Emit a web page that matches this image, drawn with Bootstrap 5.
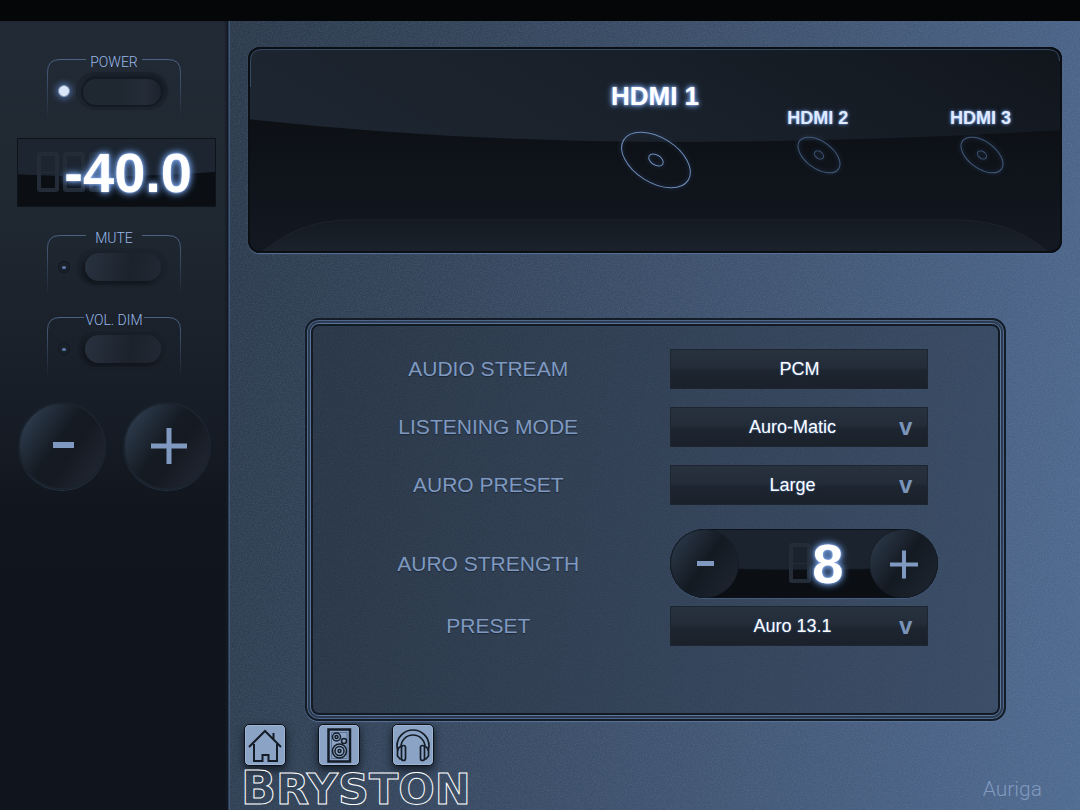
<!DOCTYPE html>
<html lang="en">
<head>
<meta charset="utf-8">
<meta name="viewport" content="width=device-width, initial-scale=1">
<title>Bryston Auriga</title>
<link href="https://cdn.jsdelivr.net/npm/bootstrap@5.3.0/dist/css/bootstrap.min.css" rel="stylesheet">
<style>
:root{--steel:#7f99c0;--glow:#6f9be0;--ink:#10151c}
body{background:#050608;font-family:"Liberation Sans",Arial,sans-serif;color:#fff}
.topbar{height:21px;background:#050608}
button,select{font-family:inherit}

/* left rail */
.rail{width:230px;padding-top:33px;background:linear-gradient(#222a35 0,#1f2731 25%,#171d26 50%,#11161e 62%,#10151d 100%);box-shadow:inset -1px 0 #40587a,inset -2px 0 #2a3a50,inset -4px 0 2px #141a22}
.ctl{width:134px;height:64px;margin-left:47px}
.ctl+.ctl{margin-top:18px}
.ctl .bracket{left:0;top:5px}
.ctl-name{font-family:Roboto,"Liberation Sans",sans-serif;font-weight:300;font-size:14px;line-height:16px;height:18px;color:#9ab8e8}
.ctl-row{padding-left:11px;gap:6px;height:38px}
.led{width:12px;height:12px;border-radius:50%;background:#1a212b;box-shadow:inset 0 0 0 1px #141a22}
.led::after{content:"";display:block;width:4px;height:3px;border-radius:50%;background:#5c7dae;margin:5px 4px}
.led.on{background:#dbe6f8;border:1px solid #7d93b4;box-shadow:0 0 6px 2px #4a6694}
.led.on::after{display:none}
.switch{width:92px;height:38px;border-radius:19px;border:1px solid #1c232d;background:rgba(16,21,28,.18);padding:4px 4px 4px 8px}
.switch i{display:block;width:76px;height:28px;border-radius:14px;background:linear-gradient(100deg,#28323f,#1c222c 60%,#222934);box-shadow:-3px 3px 4px #11161d}
.switch.on i{width:82px;height:30px;margin-left:-4px;border:2px solid #141a23;border-radius:15px;background:linear-gradient(90deg,#1f2731 45%,#242c38 80%,#1c232d);box-shadow:2px -2px 4px #141a22}
.readout{height:69px;margin:20px 14px 23px 17px;padding-right:23px;background:radial-gradient(ellipse 130% 56% at 40% 0,#1c2530 98%,#0b0f14 100%);border:1px solid #0f141b}
.digits{font-size:56px;line-height:67px;font-weight:700;text-shadow:0 0 2px #a9c6ff,0 0 6px var(--glow),0 0 8px var(--glow)}
/* unlit display cells */
.unlit{left:19px;top:13px;gap:4px}
.unlit i{width:22px;height:40px;border:4px solid #232c37;border-radius:3px;background:linear-gradient(#232c37,#232c37) center/100% 1px no-repeat}
.round{width:88px;height:88px;border-radius:50%;border:2px solid #1b232e;padding:0;background:linear-gradient(125deg,#2f3e50 8%,#151b23 45%,#151a22 60%,#222834 95%);box-shadow:0 1px 0 #253140}
.dials{gap:17px;margin:26px 2px 0 0}
.round svg,.knob svg{display:block;margin:auto;fill:none;stroke:var(--steel)}

/* brushed plate */
.plate{padding:26px 18px 0;background:
 url("data:image/svg+xml,%3Csvg xmlns='http://www.w3.org/2000/svg' width='200' height='200'%3E%3Cfilter id='n'%3E%3CfeTurbulence type='fractalNoise' baseFrequency='.85' numOctaves='3' stitchTiles='stitch'/%3E%3CfeColorMatrix values='0 0 0 0 .6 0 0 0 0 .7 0 0 0 0 .85 .5 0 0 0 -.17'/%3E%3C/filter%3E%3Crect width='200' height='200' filter='url(%23n)' opacity='.4'/%3E%3C/svg%3E"),
 linear-gradient(100deg,#2b394b 0,#314257 22%,#3c4f6a 50%,#486083 82%,#4f6a90 100%)}
.screen{height:206px;border-radius:12px;background:#11161d;box-shadow:0 1px 1px #58739a;overflow:hidden}
.screen>svg{inset:0}
.slot{width:20%;color:#fff;text-decoration:none}
.slot-name{font-weight:700;font-size:18px;line-height:24px;margin-top:59px;color:#dfeaff;text-shadow:0 0 2px #7fa5e8,0 0 4px #5679b5}
.slot svg{display:block;fill:none;stroke:#42597b;margin:3px auto 0;overflow:visible;filter:drop-shadow(0 0 2px #2f4668)}
.slot.current .slot-name{font-size:26px;line-height:32px;margin-top:33px;color:#fff;text-shadow:0 0 2px #a9c6ff,0 0 5px var(--glow),0 0 7px var(--glow)}
.slot.current svg{stroke:#6d8cba;margin-top:16px}

.panel{margin:65px 56px 0 57px;height:403px;border-radius:14px;padding:29px 0 0;border:2px solid #141c27;background:rgba(34,42,55,.42);box-shadow:inset 0 0 0 1px #4d6689,inset 0 0 0 3px #2c3b50,inset 0 0 0 4px #5a759c,inset 0 0 0 6px #131a24,0 1px 1px #58739a}
.field{min-height:40px;margin-bottom:18px}
.field.tall{margin:24px 0 8px}
.field-name{width:52%;font-size:21px;line-height:24px;color:var(--steel);text-shadow:0 1px 1px #1c2736}
.box{width:258px;height:40px;font-size:18px;line-height:38px;color:#fff;text-align:center;border:1px solid #1d2530;border-radius:0;background:linear-gradient(#28323f,#232c38 45%,#1d2530 55%,#1b212b);text-shadow:0 0 2px #4a74b5}
.field-name+*{margin-left:1px}
select.box{appearance:none;text-align-last:center;padding:0 14px 0 0}
.caret{right:16px;top:0;font-size:24px;line-height:40px;font-weight:700;color:#7a94ba;pointer-events:none}
.stepper{width:268px;height:69px;border-radius:35px;background:radial-gradient(ellipse 130% 60% at 50% 0,#1b232e 96%,#0b0f14 100%);box-shadow:inset 0 0 0 1px #0c1118,0 1px 1px #465d7d}
.knob{width:69px;height:69px;border-radius:50%;border:1px solid #161e28;padding:0;background:linear-gradient(125deg,#2a3747 10%,#141a22 50%,#1f2530 95%)}
.count{width:54px;margin-right:26px}
.count .digits{line-height:69px}
.count .unlit{left:0;top:14px}

.tiles{gap:32px;margin-left:-4px;padding-top:3px}
.tile{width:42px;height:42px;padding:0;border:1px solid #0c1118;border-radius:5px;background:#8ba3c4;box-shadow:inset 0 0 0 1px #9db4d4,0 4px 8px #151d28}
.tile svg{display:block;margin:auto;fill:none;stroke:#141c27;stroke-width:2}
.brand{font-family:"DejaVu Sans",sans-serif;font-weight:700;font-size:43px;line-height:38px;height:38px;text-transform:uppercase;color:transparent;-webkit-text-stroke:1px #fff;margin:3px 0 3px -7px}
.brand::first-letter{font-size:46px}
.model{font-family:Roboto,"Liberation Sans",sans-serif;font-weight:300;font-size:21px;line-height:28px;color:#8099bf;margin:0 20px 7px 0}
</style>
</head>
<body class="min-vh-100 d-flex flex-column">
<div class="topbar"></div>
<div class="d-flex flex-grow-1">
  <aside class="rail flex-shrink-0">
    <div class="ctl position-relative">
      <svg class="bracket position-absolute" width="134" height="60" fill="none" stroke="url(#fade)"><defs><linearGradient id="fade" x1="0" y1="0" x2="0" y2="60" gradientUnits="userSpaceOnUse"><stop stop-color="#4b6285"/><stop offset="1" stop-color="#4b6285" stop-opacity="0"/></linearGradient></defs><path d="M.5 60V13Q.5.5 13 .5H39M95 .5H121Q133.500 .5 133.500 13V60"/></svg>
      <div class="ctl-name position-relative text-center" id="n-power">POWER</div>
      <div class="ctl-row d-flex align-items-center"><span class="led on"></span><button class="switch on" aria-labelledby="n-power" aria-pressed="true"><i></i></button></div>
    </div>
    <div class="readout position-relative text-end overflow-hidden">
      <div class="unlit position-absolute d-flex" aria-hidden="true"><i></i><i></i><i></i></div>
      <output class="digits position-relative">-40.0</output>
    </div>
    <div class="ctl position-relative">
      <svg class="bracket position-absolute" width="134" height="60" fill="none" stroke="url(#fade)"><path d="M.5 60V13Q.5.5 13 .5H39M95 .5H121Q133.500 .5 133.500 13V60"/></svg>
      <div class="ctl-name position-relative text-center" id="n-mute">MUTE</div>
      <div class="ctl-row d-flex align-items-center"><span class="led"></span><button class="switch" aria-labelledby="n-mute" aria-pressed="false"><i></i></button></div>
    </div>
    <div class="ctl position-relative">
      <svg class="bracket position-absolute" width="134" height="60" fill="none" stroke="url(#fade)"><path d="M.5 60V13Q.5.5 13 .5H37M97 .5H121Q133.500 .5 133.500 13V60"/></svg>
      <div class="ctl-name position-relative text-center" id="n-dim">VOL. DIM</div>
      <div class="ctl-row d-flex align-items-center"><span class="led"></span><button class="switch" aria-labelledby="n-dim" aria-pressed="false"><i></i></button></div>
    </div>
    <div class="dials d-flex justify-content-center">
      <button class="round" aria-label="Volume down"><svg width="84" height="84" stroke-width="6"><path d="M33 41H54"/></svg></button>
      <button class="round" aria-label="Volume up"><svg width="84" height="84" stroke-width="5"><path d="M26 42H62M44 24V60"/></svg></button>
    </div>
  </aside>

  <main class="plate flex-grow-1">
    <nav class="screen position-relative d-flex justify-content-end text-center" aria-label="Inputs">
      <svg class="position-absolute w-100 h-100" viewBox="0 0 814 206" preserveAspectRatio="none">
        <defs>
          <linearGradient id="gloss" x1="0" x2="1" y1=".2" y2="0"><stop stop-color="#1d2530"/><stop offset=".5" stop-color="#181f28"/><stop offset="1" stop-color="#11161d"/></linearGradient>
          <linearGradient id="deep" x1="0" x2="0" y1="0" y2="1"><stop offset=".4" stop-color="#0d1116"/><stop offset="1" stop-color="#131822"/></linearGradient>
          <linearGradient id="lip" x1="0" x2="0" y1="0" y2="1"><stop stop-color="#141a20"/><stop offset="1" stop-color="#1b222c"/></linearGradient>
        </defs>
        <path fill="url(#deep)" d="M0 0H814V206H0z"/>
        <path fill="url(#gloss)" d="M0 2H814V83Q612 95 412 95Q200 94 0 72z"/>
        <path fill="url(#lip)" stroke="#1d242e" d="M14 205Q52 173 102 173H712Q767 175 800 205"/>
        <rect x="1" y="1" width="812" height="204" rx="11" fill="none" stroke="#0b0f14" stroke-width="2"/>
        <path fill="none" stroke="#344964" d="M2.500 40V14Q2.500 2.500 14 2.500H800Q811.500 2.500 811.500 14"/>
      </svg>
      <a href="#hdmi1" class="slot current position-relative"><div class="slot-name">HDMI 1</div><svg width="76" height="64" viewBox="-39 -32 76 64"><g transform="rotate(32)"><ellipse rx="38" ry="22.500"/><ellipse rx="8" ry="5"/></g></svg></a>
      <a href="#hdmi2" class="slot position-relative"><div class="slot-name">HDMI 2</div><svg width="44" height="44" viewBox="-23 -22 44 44"><g transform="rotate(36)"><ellipse rx="24" ry="13.500"/><ellipse rx="5" ry="3.500"/></g></svg></a>
      <a href="#hdmi3" class="slot position-relative"><div class="slot-name">HDMI 3</div><svg width="44" height="44" viewBox="-23 -22 44 44"><g transform="rotate(36)"><ellipse rx="24" ry="13.500"/><ellipse rx="5" ry="3.500"/></g></svg></a>
    </nav>

    <section class="panel">
      <div class="field d-flex align-items-center">
        <label class="field-name text-center" for="stream">AUDIO STREAM</label>
        <output class="box" id="stream">PCM</output>
      </div>
      <div class="field d-flex align-items-center">
        <label class="field-name text-center" for="mode">LISTENING MODE</label>
        <div class="position-relative"><select class="box" id="mode"><option>Auro-Matic</option></select><span class="caret position-absolute" aria-hidden="true">v</span></div>
      </div>
      <div class="field d-flex align-items-center">
        <label class="field-name text-center" for="size">AURO PRESET</label>
        <div class="position-relative"><select class="box" id="size"><option>Large</option></select><span class="caret position-absolute" aria-hidden="true">v</span></div>
      </div>
      <div class="field tall d-flex align-items-center">
        <label class="field-name text-center" for="strength">AURO STRENGTH</label>
        <div class="stepper d-flex justify-content-between">
          <button class="knob" aria-label="Strength down"><svg width="67" height="67" stroke-width="5"><path d="M26 33.500H43"/></svg></button>
          <div class="count position-relative text-end ms-auto"><div class="unlit position-absolute d-flex" aria-hidden="true"><i></i></div><output class="digits position-relative" id="strength">8</output></div>
          <button class="knob" aria-label="Strength up"><svg width="67" height="67" stroke-width="4"><path d="M20 34.500H48M34 20.500V48.500"/></svg></button>
        </div>
      </div>
      <div class="field d-flex align-items-center">
        <label class="field-name text-center" for="preset">PRESET</label>
        <div class="position-relative"><select class="box" id="preset"><option>Auro 13.1</option></select><span class="caret position-absolute" aria-hidden="true">v</span></div>
      </div>
    </section>

    <footer class="d-flex justify-content-between align-items-end">
      <div>
        <div class="tiles d-flex">
          <button class="tile" aria-label="Home"><svg width="40" height="40"><path d="M4 22 20 6 36 22M28.500 14V8M9 19V36H17.500V30H23.500V36H32V19"/></svg></button>
          <button class="tile" aria-label="Speakers"><svg width="40" height="40"><g stroke-width="1.500"><path d="M9.500 4.500H31V36.500H9.500z" stroke-width="2.500"/><path d="M12.500 7.500H28V33.500H12.500z" stroke="#5c7394" stroke-width="1"/><circle cx="17.500" cy="12" r="4"/><circle cx="17.500" cy="12" r="1.500"/><circle cx="25" cy="16" r="2.500"/><circle cx="20.500" cy="26" r="7"/><circle cx="20.500" cy="26" r="4.500"/><circle cx="20.500" cy="26" r="1.500"/></g></svg></button>
          <button class="tile" aria-label="Headphones"><svg width="40" height="40"><g stroke-width="1.700"><path d="M5 26Q4 23 4 21A16 16 0 0 1 36 21Q36 23 35 26M8 22A12 12 0 0 1 32 22"/><path d="M8 22H6.500L4.500 25V31L7 34H8M32 22H33.500L35.500 25V31L33 34H32"/><rect x="8.500" y="20.500" width="4" height="15" rx="2"/><rect x="27.500" y="20.500" width="4" height="15" rx="2"/></g></svg></button>
        </div>
        <div class="brand">Bryston</div>
      </div>
      <div class="model">Auriga</div>
    </footer>
  </main>
</div>
<script src="https://cdn.jsdelivr.net/npm/bootstrap@5.3.0/dist/js/bootstrap.bundle.min.js"></script>
</body>
</html>
